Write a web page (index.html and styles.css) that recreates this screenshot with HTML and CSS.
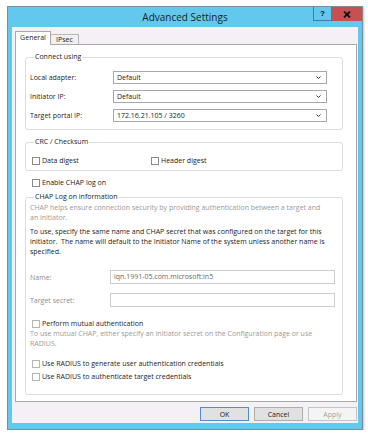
FILE: index.html
```html
<!DOCTYPE html>
<html>
<head>
  <meta charset="UTF-8">
  <title>Advanced Settings</title>
  <link rel="stylesheet" href="styles.css">
</head>
<body>
  <div class="window">
    <div class="titlebar">
      <span></span>
      <span class="title">Advanced Settings</span>
      <div class="caption-buttons">
        <span class="cap-btn help">?</span>
        <span class="cap-btn close">
          <svg width="8" height="7" viewBox="0 0 8 7"><path d="M1 0.5 L7 6.5 M7 0.5 L1 6.5" stroke="#111" stroke-width="1.8"/></svg>
        </span>
      </div>
    </div>

    <div class="client">
      <div class="tabs">
        <span class="tab active">General</span>
        <span class="tab">IPsec</span>
      </div>

      <div class="panel">
        <fieldset class="group connect">
          <legend>Connect using</legend>
          <div class="field-row">
            <span class="field-label">Local adapter:</span>
            <div class="select">Default<svg class="chevron" width="5" height="3" viewBox="0 0 5 3"><path d="M0.5 0.5 L2.5 2.5 L4.5 0.5" fill="none" stroke="#333" stroke-width="1"/></svg></div>
          </div>
          <div class="field-row">
            <span class="field-label">Initiator IP:</span>
            <div class="select">Default<svg class="chevron" width="5" height="3" viewBox="0 0 5 3"><path d="M0.5 0.5 L2.5 2.5 L4.5 0.5" fill="none" stroke="#333" stroke-width="1"/></svg></div>
          </div>
          <div class="field-row">
            <span class="field-label">Target portal IP:</span>
            <div class="select">172.16.21.105 / 3260<svg class="chevron" width="5" height="3" viewBox="0 0 5 3"><path d="M0.5 0.5 L2.5 2.5 L4.5 0.5" fill="none" stroke="#333" stroke-width="1"/></svg></div>
          </div>
        </fieldset>

        <fieldset class="group crc">
          <legend>CRC / Checksum</legend>
          <div class="check-grid">
            <label class="check"><span class="box"></span>Data digest</label>
            <label class="check"><span class="box"></span>Header digest</label>
          </div>
        </fieldset>

        <label class="check enable-chap"><span class="box"></span>Enable CHAP log on</label>

        <fieldset class="group chap">
          <legend>CHAP Log on information</legend>
          <p class="note muted intro">CHAP helps ensure connection security by providing authentication between a target and an initiator.</p>
          <p class="note usage">To use, specify the same name and CHAP secret that was configured on the target for this initiator.&nbsp; The name will default to the Initiator Name of the system unless another name is specified.</p>

          <div class="field-row input-row first">
            <span class="field-label disabled">Name:</span>
            <div class="input">iqn.1991-05.com.microsoft:in5</div>
          </div>
          <div class="field-row input-row">
            <span class="field-label disabled">Target secret:</span>
            <div class="input"></div>
          </div>

          <label class="check disabled mutual"><span class="box"></span>Perform mutual authentication</label>
          <p class="note muted mutual-note">To use mutual CHAP, either specify an initiator secret on the Configuration page or use RADIUS.</p>

          <label class="check disabled radius-first"><span class="box"></span>Use RADIUS to generate user authentication credentials</label>
          <label class="check disabled radius-second"><span class="box"></span>Use RADIUS to authenticate target credentials</label>
        </fieldset>
      </div>

      <div class="buttons">
        <button class="btn default">OK</button>
        <button class="btn">Cancel</button>
        <button class="btn" disabled>Apply</button>
      </div>
    </div>
  </div>
</body>
</html>
```

FILE: styles.css
```css
:root {
  --frame-blue: #62c8ee;
  --frame-edge: #7d8d97;
  --client-bg: #f4f0f5;
  --panel-border: #a9a9a9;
  --group-border: #dcdcdc;
  --text: #1b1b1b;
  --text-muted: #9b9b9b;
  --field-border: #a8a8a8;
  --field-disabled: #cdcdcd;
}

* {
  box-sizing: border-box;
  margin: 0;
  padding: 0;
}

body {
  background: #ffffff;
  padding: 6px 0 0 7px;
  font-family: 'Open Sans', 'Noto Sans', sans-serif;
  font-size: 7px;
  color: var(--text);
}

.window {
  width: 356px;
  height: 424px;
  border: 1px solid var(--frame-edge);
  background: var(--frame-blue);
  display: flex;
  flex-direction: column;
  box-shadow: 1px 1px 2px rgb(0 0 0 / 0.25);
}

/* title bar */
.titlebar {
  height: 20px;
  display: grid;
  grid-template-columns: 1fr auto 1fr;
}

.title {
  font-size: 10px;
  line-height: 20px;
  color: #1e1e1e;
}

.caption-buttons {
  justify-self: end;
  display: flex;
  align-items: flex-start;
}

.cap-btn {
  height: 14px;
  display: flex;
  align-items: center;
  justify-content: center;
}

.help {
  width: 19px;
  border: 1px solid #3b7fa3;
  border-top: none;
  font-family: 'Liberation Sans', sans-serif;
  font-weight: bold;
  font-size: 8px;
  color: #111;
}

.close {
  width: 30px;
  background: #c75050;
}

/* client area */
.client {
  flex: 1;
  margin: 0 4px 6px;
  background: var(--client-bg);
  padding: 4px 1px 2px 3px;
  display: flex;
  flex-direction: column;
}

.tabs {
  display: flex;
  align-items: flex-end;
  height: 14px;
  margin-bottom: -1px;
}

.tab {
  height: 11px;
  width: 28px;
  border: 1px solid #b9b9b9;
  border-left: none;
  border-bottom: none;
  background: #f0f0f0;
  line-height: 10px;
  text-align: center;
}

.tab.active {
  position: relative;
  z-index: 1;
  width: 36px;
  height: 14px;
  border-left: 1px solid var(--panel-border);
  border-color: var(--panel-border);
  background: #ffffff;
  line-height: 12px;
}

.panel {
  height: 358px;
  border: 1px solid var(--panel-border);
  background: #ffffff;
  padding: 7px 13px 6px 9px;
  display: flex;
  flex-direction: column;
}

/* group boxes */
.group {
  border: 1px solid var(--group-border);
  border-radius: 3px;
  padding: 0 7px 0 4px;
}

.group legend {
  line-height: 10px;
  padding: 0 1px;
  margin-left: 4px;
}

.connect {
  padding-top: 9px;
  padding-bottom: 7px;
  display: flex;
  flex-direction: column;
  gap: 6px;
}

.field-row {
  display: flex;
  align-items: center;
}

.connect .field-label {
  width: 83px;
}

.select {
  width: 214px;
  height: 13px;
  border: 1px solid var(--field-border);
  background: #ffffff;
  display: flex;
  align-items: center;
  justify-content: space-between;
  padding: 0 5px 0 3px;
}

.crc {
  margin-top: 7px;
  padding-top: 9px;
  padding-bottom: 5px;
}

.check-grid {
  display: grid;
  grid-template-columns: 119px auto;
  padding-left: 2px;
}

.check {
  display: flex;
  align-items: center;
  height: 9px;
  white-space: nowrap;
}

.box {
  width: 8px;
  height: 8px;
  border: 1px solid #8a8a8a;
  background: #ffffff;
  margin-right: 2px;
}

.enable-chap {
  margin: 7px 0 0 7px;
}

.chap {
  margin-top: 5px;
  padding-top: 1px;
  padding-bottom: 13px;
}

.note {
  line-height: 10px;
}

.note.intro {
  max-width: 292px;
}

.muted {
  color: var(--text-muted);
}

.usage {
  margin-top: 4px;
}

.input-row {
  margin-top: 9px;
}

.input-row.first {
  margin-top: 13px;
}

.input-row .field-label {
  width: 80px;
}

.field-label.disabled {
  color: #8e8e8e;
}

.input {
  width: 225px;
  height: 14px;
  border: 1px solid var(--field-disabled);
  background: #ffffff;
  padding: 0 3px;
  line-height: 12px;
  color: #6a6a6a;
}

.check.disabled {
  margin-left: 2px;
}

.check.disabled .box {
  border-color: #b5b5b5;
}

.mutual {
  margin-top: 12px;
}

.mutual-note {
  margin-top: 1px;
}

.radius-first {
  margin-top: 10px;
}

.radius-second {
  margin-top: 4px;
}

/* dialog buttons */
.buttons {
  margin-top: 5px;
  display: flex;
  justify-content: flex-end;
  gap: 5px;
}

.btn {
  width: 49px;
  height: 14px;
  border: 1px solid #adadad;
  background: #e1e1e1;
  font-family: inherit;
  font-size: 7px;
  color: var(--text);
}

.btn.default {
  border-color: #4a8fd0;
}

.btn:disabled {
  background: #f4f4f4;
  border-color: #c4c4c4;
  color: #a2a2a2;
}
```
